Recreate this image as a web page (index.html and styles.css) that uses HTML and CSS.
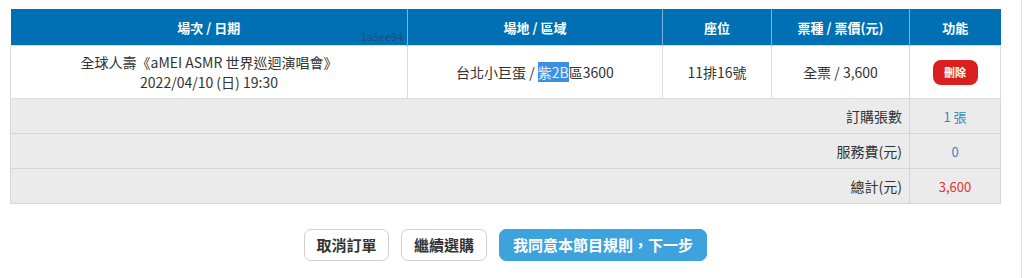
FILE: index.html
```html
<!doctype html>
<html>
<head>
<meta charset="utf-8">
<title>購物車</title>
<link rel="stylesheet" href="styles.css">
</head>
<body>
<div class="page">
	<table class="cart">
		<colgroup>
			<col class="c1"><col class="c2"><col class="c3"><col class="c4"><col class="c5">
		</colgroup>
		<thead>
			<tr>
				<th>場次 / 日期<span class="hash">1a5ee94</span></th>
				<th>場地 / 區域</th>
				<th>座位</th>
				<th>票種 / 票價(元)</th>
				<th>功能</th>
			</tr>
		</thead>
		<tbody>
			<tr class="item">
				<td>全球人壽《aMEI ASMR 世界巡迴演唱會》<br>2022/04/10 (日) 19:30</td>
				<td>台北小巨蛋 / <span class="sel">紫2B</span>區3600</td>
				<td>11排16號</td>
				<td>全票 / 3,600</td>
				<td><a href="javascript:;" class="btn-del">刪除</a></td>
			</tr>
			<tr class="sum">
				<td colspan="4" class="label">訂購張數</td>
				<td class="val blue">1 張</td>
			</tr>
			<tr class="sum">
				<td colspan="4" class="label">服務費(元)</td>
				<td class="val blue">0</td>
			</tr>
			<tr class="sum">
				<td colspan="4" class="label">總計(元)</td>
				<td class="val red">3,600</td>
			</tr>
		</tbody>
	</table>
	<div class="actions">
		<a href="javascript:;" class="btn">取消訂單</a>
		<a href="javascript:;" class="btn">繼續選購</a>
		<a href="javascript:;" class="btn btn-go">我同意本節目規則，下一步</a>
	</div>
</div>
</body>
</html>
```

FILE: styles.css
```css
*{margin:0;padding:0}
body{font-family:"Noto Sans CJK TC","Noto Sans",sans-serif;color:#333;background:#fff}
.page{width:1022px;height:278px;padding:9px 0 0 10px;border-right:1px solid #e4e4e4;box-sizing:border-box}
.cart{width:991px;border-collapse:collapse;table-layout:fixed;font-size:14px}
.cart .c1{width:397px}
.cart .c2{width:255px}
.cart .c3{width:109px}
.cart .c4{width:138px}
.cart th{background:#0070b5;color:#fff;font-size:13px;font-weight:bold;height:36px;border-left:1px solid #80b3d8;position:relative}
.cart th:first-child{border-left:none}
.cart .hash{position:absolute;right:4px;bottom:2px;font-family:"DejaVu Sans Mono",monospace;font-size:10px;font-weight:normal;color:#1f4d78}
.cart td{border:1px solid #dcdcdc;text-align:center}
.cart .item td{height:52px;line-height:20px;background:#fff}
.cart .sel{background:#3d8ee5;color:#e6f0fb}
.btn-del{display:inline-block;width:45px;height:25px;line-height:25px;border-radius:8px;background:#d9201f;color:#fff;font-size:11px;font-weight:bold;text-decoration:none}
.cart .sum td{background:#ebebeb;height:34px;border-color:#d6d6d6}
.cart .sum .label{text-align:right;padding-right:7px}
.cart .val{font-size:13px}
.cart .blue{color:#3a86c6}
.cart .red{color:#e43232}
.actions{width:991px;display:flex;justify-content:center;gap:12.5px;margin-top:25px}
.btn{display:block;height:30px;line-height:30px;padding:0 11.5px;border:1px solid #cfcfcf;border-radius:7px;background:#fff;color:#333;font-size:15px;font-weight:bold;text-decoration:none}
.btn-go{padding:0 13px;background:#3ea3dd;border-color:#3ea3dd;color:#fff}
```
